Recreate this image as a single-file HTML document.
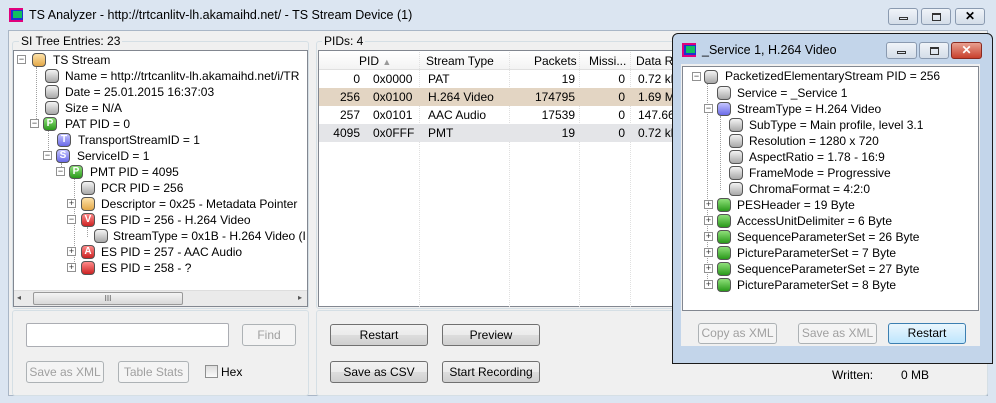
<!DOCTYPE html>
<html><head><meta charset="utf-8"><style>
*{box-sizing:border-box;margin:0;padding:0}
body{width:996px;height:403px;overflow:hidden;background:#dbe5f1;font-family:"Liberation Sans",sans-serif;font-size:12px;color:#000;position:relative}
.a{position:absolute}
.t{position:absolute;white-space:nowrap;line-height:16px;height:16px}
.ic{position:absolute;width:14px;height:14px;border-radius:4px;border:1px solid #555;background:linear-gradient(#f4f4f4,#a8a8a8);color:#fff;font-weight:bold;font-size:10px;line-height:12px;text-align:center}
.g{background:linear-gradient(#8fe07a,#2a9a1a)}
.o{background:linear-gradient(#fde2a8,#e3a848)}
.b{background:linear-gradient(#c4c4ff,#6a6ae8)}
.r{background:linear-gradient(#ff8a8a,#cc2222)}
.ex{position:absolute;width:9px;height:9px;border:1px solid #919191;background:#fff;font-size:9px;line-height:7px;text-align:center;color:#333}
.btn{position:absolute;border:1px solid #707070;border-radius:3px;background:linear-gradient(#f2f2f2 0,#ebebeb 50%,#dddddd 51%,#cfcfcf 100%);text-align:center;line-height:20px}
.dis{border-color:#adb2b5;background:#f4f4f4;color:#a0a0a0}
.grp{position:absolute;border:1px solid #d5dfe5;border-radius:3px}
.cell{position:absolute;line-height:18px;white-space:nowrap}
.wb{position:absolute;border:1px solid #8a9ab0;border-radius:3px;background:linear-gradient(#f0f4f9,#d4dde8)}
</style></head><body>
<!-- main client area -->
<div class="a" style="left:8px;top:30px;width:980px;height:366px;background:#f0f0f0;border:1px solid #a9b6c6"></div>
<div class="a" style="left:9px;top:8px;width:14px;height:14px;background:#e0007c"><div class="a" style="left:2px;top:2px;width:12px;height:10px;background:#2030d0"><div class="a" style="left:2px;top:1px;width:9px;height:7px;background:#10c060"></div></div></div>
<div class="t" style="left:29px;top:7px;font-size:12.5px">TS Analyzer - http://trtcanlitv-lh.akamaihd.net/ - TS Stream Device (1)</div>
<div class="wb" style="left:888px;top:8px;width:30px;height:17px"><div class="a" style="left:10px;top:8px;width:9px;height:3px;border:1px solid #333"></div></div>
<div class="wb" style="left:921px;top:8px;width:30px;height:17px"><div class="a" style="left:10px;top:4px;width:9px;height:8px;border:1px solid #333;border-top-width:2px"></div></div>
<div class="wb" style="left:955px;top:8px;width:30px;height:17px;text-align:center;font-weight:bold;line-height:15px">✕</div>

<!-- left group -->
<div class="grp" style="left:12px;top:41px;width:297px;height:268px"></div>
<div class="t" style="left:19px;top:33px;background:#f0f0f0;padding:0 2px">SI Tree Entries: 23</div>
<div class="a" style="left:13px;top:50px;width:295px;height:257px;background:#fff;border:1px solid #828790"></div>
<div class="a" style="left:14px;top:290px;width:293px;height:16px;background:#eaeaea;border-top:1px solid #ddd"></div>
<div class="a" style="left:33px;top:292px;width:150px;height:13px;border:1px solid #999;border-radius:2px;background:linear-gradient(#f4f4f4,#d8d8d8);text-align:center;font-size:8px;line-height:11px;color:#555">III</div>
<div class="t" style="left:17px;top:290px;font-size:8px;color:#555">◂</div>
<div class="t" style="left:298px;top:290px;font-size:8px;color:#555">▸</div>

<!-- dotted lines -->
<div class="a" style="left:36px;top:67px;height:58px;border-left:1px dotted #a0a0a0"></div>
<div class="a" style="left:48px;top:131px;height:27px;border-left:1px dotted #a0a0a0"></div>
<div class="a" style="left:61px;top:163px;height:10px;border-left:1px dotted #a0a0a0"></div>
<div class="a" style="left:74px;top:179px;height:89px;border-left:1px dotted #a0a0a0"></div>
<div class="a" style="left:87px;top:227px;height:10px;border-left:1px dotted #a0a0a0"></div>

<div class="ex" style="left:17px;top:55px">−</div><div class="ic o" style="left:32px;top:53px"></div><div class="t" style="left:53px;top:52px">TS Stream</div>
<div class="ic" style="left:45px;top:69px"></div><div class="t" style="left:65px;top:68px">Name = http://trtcanlitv-lh.akamaihd.net/i/TR</div>
<div class="ic" style="left:45px;top:85px"></div><div class="t" style="left:65px;top:84px">Date = 25.01.2015 16:37:03</div>
<div class="ic" style="left:45px;top:101px"></div><div class="t" style="left:65px;top:100px">Size = N/A</div>
<div class="ex" style="left:30px;top:119px">−</div><div class="ic g" style="left:43px;top:117px">P</div><div class="t" style="left:65px;top:116px">PAT PID = 0</div>
<div class="ic b" style="left:57px;top:133px">T</div><div class="t" style="left:78px;top:132px">TransportStreamID = 1</div>
<div class="ex" style="left:43px;top:151px">−</div><div class="ic b" style="left:56px;top:149px">S</div><div class="t" style="left:77px;top:148px">ServiceID = 1</div>
<div class="ex" style="left:56px;top:167px">−</div><div class="ic g" style="left:69px;top:165px">P</div><div class="t" style="left:90px;top:164px">PMT PID = 4095</div>
<div class="ic" style="left:81px;top:181px"></div><div class="t" style="left:101px;top:180px">PCR PID = 256</div>
<div class="ex" style="left:67px;top:199px">+</div><div class="ic o" style="left:81px;top:197px"></div><div class="t" style="left:101px;top:196px">Descriptor = 0x25 - Metadata Pointer</div>
<div class="ex" style="left:67px;top:215px">−</div><div class="ic r" style="left:81px;top:213px">V</div><div class="t" style="left:101px;top:212px">ES PID = 256 - H.264 Video</div>
<div class="ic" style="left:94px;top:229px"></div><div class="t" style="left:113px;top:228px;width:193px;overflow:hidden">StreamType = 0x1B - H.264 Video (ITU</div>
<div class="ex" style="left:67px;top:247px">+</div><div class="ic r" style="left:81px;top:245px">A</div><div class="t" style="left:101px;top:244px">ES PID = 257 - AAC Audio</div>
<div class="ex" style="left:67px;top:263px">+</div><div class="ic r" style="left:81px;top:261px"></div><div class="t" style="left:101px;top:260px">ES PID = 258 - ?</div>

<!-- left bottom panel -->
<div class="grp" style="left:12px;top:310px;width:297px;height:86px"></div>
<div class="a" style="left:26px;top:323px;width:203px;height:24px;background:#fff;border:1px solid #abadb3;border-radius:2px"></div>
<div class="btn dis" style="left:242px;top:324px;width:54px;height:22px">Find</div>
<div class="btn dis" style="left:26px;top:361px;width:78px;height:22px">Save as XML</div>
<div class="btn dis" style="left:118px;top:361px;width:71px;height:22px">Table Stats</div>
<div class="a" style="left:205px;top:365px;width:13px;height:13px;border:1px solid #8e8f8f;background:linear-gradient(#ddd,#fafafa)"></div>
<div class="t" style="left:221px;top:364px">Hex</div>

<!-- right group -->
<div class="grp" style="left:316px;top:41px;width:672px;height:268px"></div>
<div class="t" style="left:322px;top:33px;background:#f0f0f0;padding:0 2px">PIDs: 4</div>
<div class="a" style="left:318px;top:50px;width:670px;height:257px;background:#fff;border:1px solid #828790"></div>
<div class="a" style="left:319px;top:52px;width:668px;height:18px;background:linear-gradient(#fff,#f3f3f3);border-bottom:1px solid #e0e0e0"></div>
<div class="a" style="left:419px;top:52px;height:255px;border-left:1px dotted #e0e0e0"></div>
<div class="a" style="left:509px;top:52px;height:255px;border-left:1px dotted #e0e0e0"></div>
<div class="a" style="left:579px;top:52px;height:255px;border-left:1px dotted #e0e0e0"></div>
<div class="a" style="left:630px;top:52px;height:255px;border-left:1px dotted #e0e0e0"></div>
<div class="cell" style="left:359px;top:52px">PID <span style="color:#999;font-size:9px">▲</span></div>
<div class="cell" style="left:426px;top:52px">Stream Type</div>
<div class="cell" style="left:534px;top:52px">Packets</div>
<div class="cell" style="left:589px;top:52px">Missi...</div>
<div class="cell" style="left:636px;top:52px">Data Ra</div>
<div class="a" style="left:319px;top:88px;width:360px;height:18px;background:#e3d5c3"></div>
<div class="a" style="left:319px;top:124px;width:360px;height:18px;background:#e4e5e8"></div>
<div class="cell" style="left:330px;top:70px;width:30px;text-align:right">0</div><div class="cell" style="left:373px;top:70px">0x0000</div><div class="cell" style="left:428px;top:70px">PAT</div><div class="cell" style="left:520px;top:70px;width:55px;text-align:right">19</div><div class="cell" style="left:600px;top:70px;width:25px;text-align:right">0</div><div class="cell" style="left:638px;top:70px">0.72 kb</div>
<div class="cell" style="left:330px;top:88px;width:30px;text-align:right">256</div><div class="cell" style="left:373px;top:88px">0x0100</div><div class="cell" style="left:428px;top:88px">H.264 Video</div><div class="cell" style="left:520px;top:88px;width:55px;text-align:right">174795</div><div class="cell" style="left:600px;top:88px;width:25px;text-align:right">0</div><div class="cell" style="left:638px;top:88px">1.69 M</div>
<div class="cell" style="left:330px;top:106px;width:30px;text-align:right">257</div><div class="cell" style="left:373px;top:106px">0x0101</div><div class="cell" style="left:428px;top:106px">AAC Audio</div><div class="cell" style="left:520px;top:106px;width:55px;text-align:right">17539</div><div class="cell" style="left:600px;top:106px;width:25px;text-align:right">0</div><div class="cell" style="left:638px;top:106px">147.66</div>
<div class="cell" style="left:330px;top:124px;width:30px;text-align:right">4095</div><div class="cell" style="left:373px;top:124px">0x0FFF</div><div class="cell" style="left:428px;top:124px">PMT</div><div class="cell" style="left:520px;top:124px;width:55px;text-align:right">19</div><div class="cell" style="left:600px;top:124px;width:25px;text-align:right">0</div><div class="cell" style="left:638px;top:124px">0.72 kb</div>

<div class="grp" style="left:316px;top:310px;width:672px;height:86px"></div>
<div class="btn" style="left:330px;top:324px;width:98px;height:22px">Restart</div>
<div class="btn" style="left:442px;top:324px;width:98px;height:22px">Preview</div>
<div class="btn" style="left:330px;top:361px;width:98px;height:22px">Save as CSV</div>
<div class="btn" style="left:442px;top:361px;width:98px;height:22px">Start Recording</div>
<div class="t" style="left:832px;top:367px">Written:</div>
<div class="t" style="left:901px;top:367px">0 MB</div>

<!-- popup -->
<div class="a" style="left:672px;top:33px;width:321px;height:331px;background:#c3d5ea;border:1px solid #1a1a1a;border-radius:6px 6px 0 0"></div>
<div class="a" style="left:681px;top:64px;width:299px;height:282px;background:#f0f0f0"></div>
<div class="a" style="left:682px;top:66px;width:297px;height:245px;background:#fff;border:1px solid #828790"></div>
<div class="a" style="left:682px;top:43px;width:14px;height:14px;background:#e0007c"><div class="a" style="left:2px;top:2px;width:12px;height:10px;background:#2030d0"><div class="a" style="left:2px;top:1px;width:9px;height:7px;background:#10c060"></div></div></div>
<div class="t" style="left:702px;top:42px;font-size:12.5px">_Service 1, H.264 Video</div>
<div class="wb" style="left:886px;top:42px;width:31px;height:17px"><div class="a" style="left:10px;top:8px;width:9px;height:3px;border:1px solid #333"></div></div>
<div class="wb" style="left:919px;top:42px;width:30px;height:17px"><div class="a" style="left:10px;top:4px;width:9px;height:8px;border:1px solid #333;border-top-width:2px"></div></div>
<div class="a" style="left:951px;top:42px;width:31px;height:17px;border:1px solid #8a2a20;border-radius:3px;background:linear-gradient(#e8a090,#c8402c);color:#fff;text-align:center;font-weight:bold;line-height:15px">✕</div>

<div class="a" style="left:707px;top:84px;height:137px;border-left:1px dotted #a0a0a0"></div>
<div class="a" style="left:720px;top:116px;height:74px;border-left:1px dotted #a0a0a0"></div>
<div class="a" style="left:707px;top:221px;height:64px;border-left:1px dotted #a0a0a0"></div>

<div class="ex" style="left:692px;top:72px">−</div><div class="ic" style="left:704px;top:70px"></div><div class="t" style="left:725px;top:68px">PacketizedElementaryStream PID = 256</div>
<div class="ic" style="left:717px;top:86px"></div><div class="t" style="left:737px;top:85px">Service = _Service 1</div>
<div class="ex" style="left:704px;top:104px">−</div><div class="ic b" style="left:717px;top:102px"></div><div class="t" style="left:737px;top:101px">StreamType = H.264 Video</div>
<div class="ic" style="left:729px;top:118px"></div><div class="t" style="left:749px;top:117px">SubType = Main profile, level 3.1</div>
<div class="ic" style="left:729px;top:134px"></div><div class="t" style="left:749px;top:133px">Resolution = 1280 x 720</div>
<div class="ic" style="left:729px;top:150px"></div><div class="t" style="left:749px;top:149px">AspectRatio = 1.78 - 16:9</div>
<div class="ic" style="left:729px;top:166px"></div><div class="t" style="left:749px;top:165px">FrameMode = Progressive</div>
<div class="ic" style="left:729px;top:182px"></div><div class="t" style="left:749px;top:181px">ChromaFormat = 4:2:0</div>
<div class="ex" style="left:704px;top:200px">+</div><div class="ic g" style="left:717px;top:198px"></div><div class="t" style="left:737px;top:197px">PESHeader = 19 Byte</div>
<div class="ex" style="left:704px;top:216px">+</div><div class="ic g" style="left:717px;top:214px"></div><div class="t" style="left:737px;top:213px">AccessUnitDelimiter = 6 Byte</div>
<div class="ex" style="left:704px;top:232px">+</div><div class="ic g" style="left:717px;top:230px"></div><div class="t" style="left:737px;top:229px">SequenceParameterSet = 26 Byte</div>
<div class="ex" style="left:704px;top:248px">+</div><div class="ic g" style="left:717px;top:246px"></div><div class="t" style="left:737px;top:245px">PictureParameterSet = 7 Byte</div>
<div class="ex" style="left:704px;top:264px">+</div><div class="ic g" style="left:717px;top:262px"></div><div class="t" style="left:737px;top:261px">SequenceParameterSet = 27 Byte</div>
<div class="ex" style="left:704px;top:280px">+</div><div class="ic g" style="left:717px;top:278px"></div><div class="t" style="left:737px;top:277px">PictureParameterSet = 8 Byte</div>

<div class="btn dis" style="left:698px;top:323px;width:79px;height:21px;line-height:19px">Copy as XML</div>
<div class="btn dis" style="left:798px;top:323px;width:79px;height:21px;line-height:19px">Save as XML</div>
<div class="btn" style="left:888px;top:323px;width:78px;height:21px;line-height:19px;border-color:#3c7fb1;background:linear-gradient(#eaf6fd,#bee6fd)">Restart</div>
</body></html>
